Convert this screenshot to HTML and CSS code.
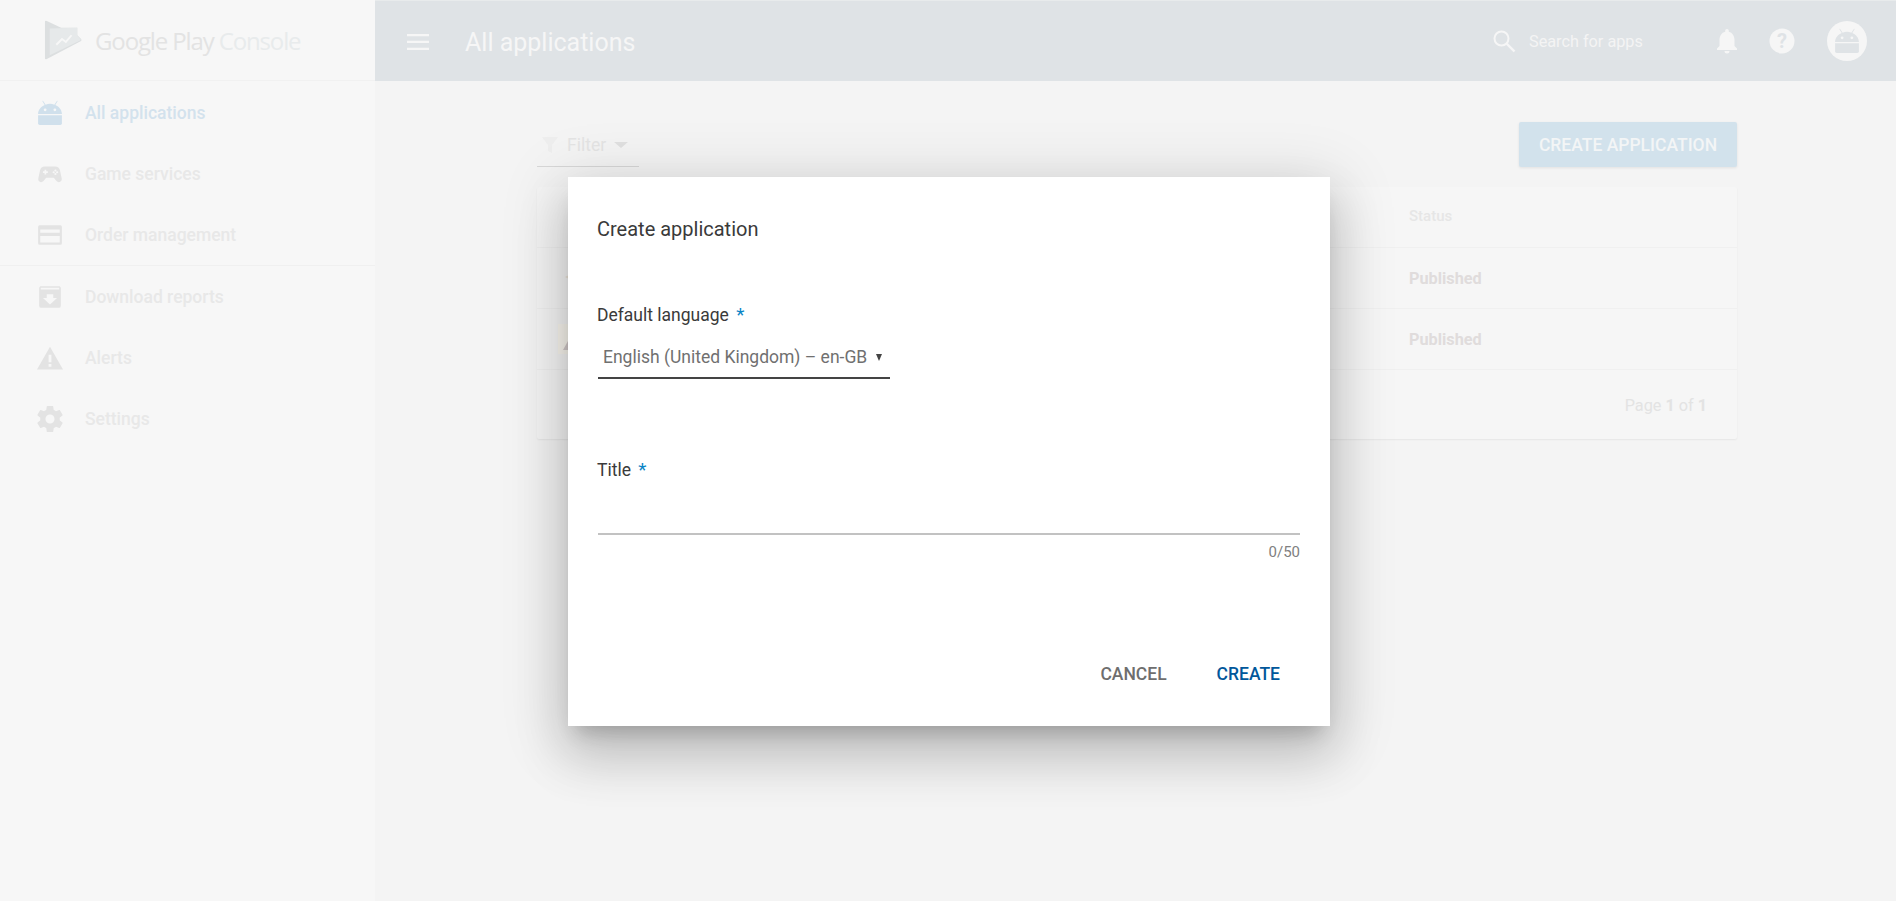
FILE: index.html
```html
<!DOCTYPE html>
<html lang="en">
<head>
    <meta charset="UTF-8">
    <title>All applications</title>
    <link rel="stylesheet" href="styles.css">
</head>
<body>
    <div class="app">
        <aside class="sidebar">
            <div class="brand">
                <svg class="brand-logo" width="38" height="42" viewBox="0 0 40 42">
                    <path d="M1 2 Q1 0 3 1 L18 8 L35 8 L35 16 L39 20 Q40 21 39 22 L3 41 Q1 42 1 40 Z" fill="#dcdfe0"/>
                    <path d="M6 9 L35 8 L35 16 L39 21 L6 37 Z" fill="#e6e9ea"/>
                    <path d="M13 26 L19 20 L23 23 L29 16" fill="none" stroke="#f7f7f7" stroke-width="2"/>
                </svg>
                <span class="brand-name">Google Play <span class="brand-light">Console</span></span>
            </div>
            <nav class="nav">
                <a class="nav-item active">
                    <svg viewBox="0 0 24 24" class="nav-icon"><use href="#android"/></svg>
                    <span>All applications</span>
                </a>
                <a class="nav-item">
                    <svg viewBox="0 0 24 24" class="nav-icon"><path d="M7.200 5h9.600c2.400 0 3.900 1.400 4.400 3.600l1.600 7.600c.4 1.900-1 3.300-2.500 3.300-1 0-1.800-.5-2.500-1.300L15.500 15.500h-7L6.200 18.200c-.7.8-1.500 1.300-2.500 1.300-1.500 0-2.900-1.400-2.500-3.300l1.600-7.600C3.300 6.400 4.800 5 7.200 5z"/><path d="M7 8v1.500H5.500V11H7v1.500h1.500V11H10V9.500H8.500V8z" fill="#f7f7f7"/><circle cx="17" cy="8.800" r="1" fill="#f7f7f7"/><circle cx="17" cy="12" r="1" fill="#f7f7f7"/><circle cx="15.400" cy="10.400" r="1" fill="#f7f7f7"/><circle cx="18.600" cy="10.400" r="1" fill="#f7f7f7"/></svg>
                    <span>Game services</span>
                </a>
                <a class="nav-item">
                    <svg viewBox="0 0 24 24" class="nav-icon"><path d="M2.500 3h19A1.500 1.500 0 0 1 23 4.500v15a1.500 1.500 0 0 1-1.500 1.500h-19A1.500 1.500 0 0 1 1 19.500v-15A1.500 1.500 0 0 1 2.500 3zM3 7v3h18V7zM3 13v6h18v-6z" fill-rule="evenodd"/></svg>
                    <span>Order management</span>
                </a>
                <div class="nav-divider"></div>
                <a class="nav-item">
                    <svg viewBox="0 0 24 24" class="nav-icon"><path d="M3 2h18l1 1.500V20a2 2 0 0 1-2 2H4a2 2 0 0 1-2-2V3.500zM3.500 3.500V5h17V3.500z" fill-rule="evenodd"/><path d="M9 9.500h6V13h3.500L12 19l-6.500-6H9z" fill="#f7f7f7"/></svg>
                    <span>Download reports</span>
                </a>
                <a class="nav-item">
                    <svg viewBox="0 0 24 24" class="nav-icon"><path d="M12 1.500 24 22.500H0zM10.700 9v7h2.600V9zM10.700 17.500v2.600h2.600v-2.600z" fill-rule="evenodd"/></svg>
                    <span>Alerts</span>
                </a>
                <a class="nav-item">
                    <svg viewBox="2 2 20 20" class="nav-icon"><path d="M19.430 12.980c.04-.32.07-.64.07-.98s-.03-.66-.07-.98l2.110-1.650c.19-.15.24-.42.12-.64l-2-3.460c-.12-.22-.39-.3-.61-.22l-2.490 1c-.52-.4-1.080-.73-1.690-.98l-.38-2.650A.488.488 0 0 0 14 2h-4c-.25 0-.46.18-.49.42l-.38 2.650c-.61.25-1.170.59-1.690.98l-2.490-1a.566.566 0 0 0-.61.22l-2 3.460c-.13.22-.07.49.12.64l2.110 1.650c-.04.32-.07.65-.07.98s.03.66.07.98l-2.110 1.650c-.19.15-.24.42-.12.64l2 3.460c.12.22.39.3.61.22l2.490-1c.52.4 1.080.73 1.690.98l.38 2.650c.03.24.24.42.49.42h4c.25 0 .46-.18.49-.42l.38-2.650c.61-.25 1.170-.59 1.690-.98l2.490 1c.23.09.49 0 .61-.22l2-3.460c.12-.22.07-.49-.12-.64zM12 15.500a3.500 3.500 0 1 1 0-7 3.500 3.500 0 0 1 0 7z"/></svg>
                    <span>Settings</span>
                </a>
            </nav>
        </aside>

        <div class="main">
            <header class="topbar">
                <svg class="menu-icon" width="22" height="16" viewBox="0 0 22 16"><path d="M0 0h22v2.300H0zM0 6.800h22v2.300H0zM0 13.700h22V16H0z"/></svg>
                <h1 class="topbar-title">All applications</h1>
                <div class="topbar-right">
                    <svg class="search-icon" width="24" height="24" viewBox="0 0 24 24"><circle cx="9.500" cy="9.500" r="7" fill="none" stroke="#f6f6f6" stroke-width="2"/><path d="M14.500 14.500 22.500 22.500" stroke="#f6f6f6" stroke-width="2.400"/></svg>
                    <span class="search-text">Search for apps</span>
                    <svg class="bell-icon" width="24" height="26" viewBox="0 0 24 26"><path d="M12 1c1 0 1.800.8 1.800 1.800v.9C17.400 4.600 19.500 8 19.500 12v6l2.500 2.500V22H2v-1.500L4.500 18v-6c0-4 2.100-7.400 5.700-8.300v-.9C10.200 1.800 11 1 12 1zM9.500 23h5a2.500 2.500 0 0 1-5 0z"/></svg>
                    <svg class="help-icon" width="26" height="26" viewBox="0 0 26 26"><circle cx="13" cy="13" r="12.500"/><text x="13" y="20" text-anchor="middle" class="help-mark">?</text></svg>
                    <div class="avatar"><svg width="26" height="26" viewBox="0 0 24 24" class="avatar-icon"><use href="#android"/></svg></div>
                </div>
            </header>

            <div class="content">
                <div class="toolbar">
                    <div class="filter">
                        <svg width="16" height="16" viewBox="0 0 16 16" class="filter-icon"><path d="M0 0h16L10 8v8l-4-2V8z"/></svg>
                        <span>Filter</span>
                        <span class="filter-caret"></span>
                    </div>
                    <button class="btn-create" type="button">CREATE APPLICATION</button>
                </div>
                <div class="table">
                    <div class="row row-head"><span class="cell-status">Status</span></div>
                    <div class="row">
                        <span class="app-thumb"></span>
                        <span class="cell-status strong">Published</span>
                    </div>
                    <div class="row">
                        <span class="app-box"><span class="app-box-shape"></span></span>
                        <span class="cell-status strong">Published</span>
                    </div>
                    <div class="row-foot">Page <b>1</b> of <b>1</b></div>
                </div>
            </div>
        </div>
    </div>

    <div class="overlay">
        <div class="modal">
            <h2 class="modal-title">Create application</h2>
            <div class="field field-lang">
                <label class="field-label">Default language <span class="req">*</span></label>
                <div class="select">
                    <span>English (United Kingdom) – en-GB</span>
                    <span class="select-caret"></span>
                </div>
            </div>
            <div class="field field-title">
                <label class="field-label">Title <span class="req">*</span></label>
                <div class="input-line"></div>
                <div class="counter">0/50</div>
            </div>
            <div class="modal-actions">
                <button class="btn-text" type="button">CANCEL</button>
                <button class="btn-text primary" type="button">CREATE</button>
            </div>
        </div>
    </div>

    <svg width="0" height="0" class="defs">
        <symbol id="android" viewBox="0 0 24 24">
            <path d="M5.500.6 8 4.300C9.200 3.800 10.500 3.500 12 3.500s2.800.3 4 .8L18.500.6l.6.4-2.200 3.700C20.500 6.300 23 9.300 23 13H1C1 9.300 3.500 6.300 7.100 4.700L4.900 1zM7.500 7.800a1.300 1.300 0 1 0 0 2.600 1.300 1.300 0 0 0 0-2.600zM16.500 7.800a1.300 1.300 0 1 0 0 2.600 1.300 1.300 0 0 0 0-2.600z" fill-rule="evenodd"/>
            <path d="M1 14h22v7.500a1.500 1.500 0 0 1-1.500 1.500h-19A1.500 1.500 0 0 1 1 21.500z"/>
        </symbol>
    </svg>
</body>
</html>
```

FILE: styles.css
```css
* {
    box-sizing: border-box;
}
html, body {
    height: 100%;
}
body {
    margin: 0;
    overflow: hidden;
    background: #f4f4f4;
    font-family: Roboto, "Liberation Sans", sans-serif;
    color: #e3e3e3;
}
.defs {
    position: absolute;
}
.app {
    display: flex;
    height: 901px;
}

/* sidebar */
.sidebar {
    width: 375px;
    flex-shrink: 0;
    background: #f7f7f7;
}
.brand {
    height: 81px;
    display: flex;
    align-items: center;
    padding-left: 44px;
    border-bottom: 1px solid #f1f1f1;
}
.brand-logo {
    margin-right: 13px;
}
.brand-name {
    font-family: "Open Sans", Roboto, sans-serif;
    font-size: 24px;
    letter-spacing: -1.13px;
    color: #e3e3e3;
}
.brand-light {
    color: #e8ebec;
}
.nav {
    display: flex;
    flex-direction: column;
    padding-top: 1px;
}
.nav-item {
    height: 61px;
    display: flex;
    align-items: center;
    padding-left: 37px;
    font-size: 17.5px;
    font-weight: 500;
    color: #e8e8e8;
    fill: #e3e3e3;
}
.nav-item.active {
    color: #d3e2ed;
    fill: #d0e0ec;
}
.nav-icon {
    width: 26px;
    height: 26px;
    margin-right: 22px;
}
.nav-divider {
    height: 1px;
    background: #f0f0f0;
}

/* top bar */
.main {
    flex: 1;
    min-width: 0;
}
.topbar {
    height: 81px;
    background: #dfe3e6;
    display: flex;
    align-items: center;
    padding: 2px 29px 0 32px;
    border-top: 1px solid #e8ebec;
}
.menu-icon {
    fill: #f6f6f6;
}
.topbar-title {
    margin: 0 0 0 36px;
    font-size: 25px;
    font-weight: 400;
    color: #f6f6f6;
}
.topbar-right {
    margin-left: auto;
    margin-top: -2px;
    display: flex;
    align-items: center;
}
.search-text {
    margin-left: 13px;
    width: 186px;
    font-size: 16.25px;
    color: #f4f4f4;
}
.bell-icon {
    fill: #f6f6f6;
}
.help-icon {
    margin-left: 30px;
    fill: #f6f6f6;
}
.help-mark {
    font-family: Roboto, sans-serif;
    font-size: 20px;
    font-weight: 700;
    fill: #dfe3e6;
}
.avatar {
    margin-left: 32px;
    width: 40px;
    height: 40px;
    border-radius: 50%;
    background: #f6f6f6;
    display: flex;
    align-items: center;
    justify-content: center;
}
.avatar-icon {
    fill: #dfe3e6;
}

/* page content */
.content {
    padding: 41px 159px 0 162px;
}
.toolbar {
    display: flex;
    justify-content: space-between;
    align-items: flex-start;
}
.filter {
    width: 102px;
    height: 45px;
    display: flex;
    align-items: center;
    padding: 2px 0 0 5px;
    border-bottom: 1px solid #d8d8d8;
    font-size: 17.5px;
    color: #e4e4e4;
}
.filter-icon {
    fill: #eeeeee;
    margin-right: 9px;
}
.filter-caret {
    margin-left: 8px;
    border-left: 7px solid transparent;
    border-right: 7px solid transparent;
    border-top: 6px solid #e0e0e0;
}
.btn-create {
    width: 218px;
    height: 45px;
    border: none;
    border-radius: 2px;
    background: #d2e2ec;
    color: #f3f5f6;
    font-family: Roboto, sans-serif;
    font-size: 17.5px;
    font-weight: 500;
    box-shadow: 0 1px 3px rgba(0, 0, 0, 0.08);
}
.table {
    margin-top: 20px;
    background: #f6f6f6;
    border-radius: 2px;
    box-shadow: 0 1px 2px rgba(0, 0, 0, 0.06);
}
.row {
    height: 61px;
    display: flex;
    align-items: center;
    position: relative;
    border-bottom: 1px solid #f0f0f0;
    font-size: 16.25px;
}
.app-thumb {
    position: absolute;
    left: 28px;
    top: 22px;
    width: 14px;
    height: 14px;
    background: #ede5d9;
    clip-path: polygon(0 50%, 100% 0, 100% 100%);
}
.app-box {
    position: absolute;
    left: 21px;
    top: 15px;
    width: 30px;
    height: 30px;
    background: #fbf8f0;
}
.app-box-shape {
    position: absolute;
    left: 5px;
    top: 8px;
    width: 20px;
    height: 18px;
    background: #d4cbcb;
    clip-path: polygon(50% 0, 100% 100%, 0 100%);
}
.cell-status {
    margin-left: 872px;
    color: #e6e6e6;
}
.row-head .cell-status {
    font-size: 15px;
    font-weight: 500;
    margin-top: -2px;
}
.strong {
    font-weight: 700;
    color: #e0dcdc;
}
.row-foot {
    height: 69px;
    display: flex;
    align-items: center;
    justify-content: flex-end;
    gap: 4px;
    padding: 2px 30px 0 0;
    font-size: 16.25px;
    color: #e3e3e3;
}

/* dialog */
.overlay {
    position: absolute;
    top: 0;
    left: 0;
    width: 100%;
    height: 901px;
}
.modal {
    position: absolute;
    left: 568px;
    top: 177px;
    width: 762px;
    height: 549px;
    padding: 0 30px;
    background: #fff;
    box-shadow: 0 30px 48px 4px rgba(0, 0, 0, 0.14), 0 11px 58px 10px rgba(0, 0, 0, 0.12), 0 14px 19px -9px rgba(0, 0, 0, 0.2);
    display: flex;
    flex-direction: column;
}
.modal-title {
    margin: 0 0 0 -1px;
    padding-top: 39px;
    font-size: 20px;
    line-height: 26px;
    font-weight: 400;
    color: #3a3a3a;
}
.field-lang {
    margin-top: 61px;
}
.field-label {
    display: block;
    margin-left: -1px;
    font-size: 17.5px;
    line-height: 24px;
    color: #3a3a3a;
}
.req {
    margin-left: 3px;
    font-size: 19px;
    line-height: 0;
    color: #0a84c6;
}
.select {
    width: 292px;
    height: 42px;
    margin-top: 10px;
    padding: 0 8px 0 5px;
    border-bottom: 2px solid #444;
    display: flex;
    align-items: center;
    justify-content: space-between;
    font-size: 17.5px;
    color: #707070;
}
.select-caret {
    border-left: 3.5px solid transparent;
    border-right: 3.5px solid transparent;
    border-top: 7px solid #444;
}
.field-title {
    margin-top: 79px;
}
.input-line {
    height: 50px;
    margin-top: 3px;
    border-bottom: 2px solid #c2c2c2;
}
.counter {
    margin-top: 8px;
    text-align: right;
    font-size: 15px;
    line-height: 18px;
    color: #808080;
}
.modal-actions {
    margin-top: auto;
    padding-bottom: 40px;
    padding-right: 20px;
    display: flex;
    justify-content: flex-end;
    gap: 50px;
}
.btn-text {
    padding: 0;
    border: none;
    background: none;
    font-family: Roboto, sans-serif;
    font-size: 17.5px;
    line-height: 24px;
    font-weight: 500;
    color: #6e6e6e;
}
.btn-text.primary {
    color: #01579b;
}
```
